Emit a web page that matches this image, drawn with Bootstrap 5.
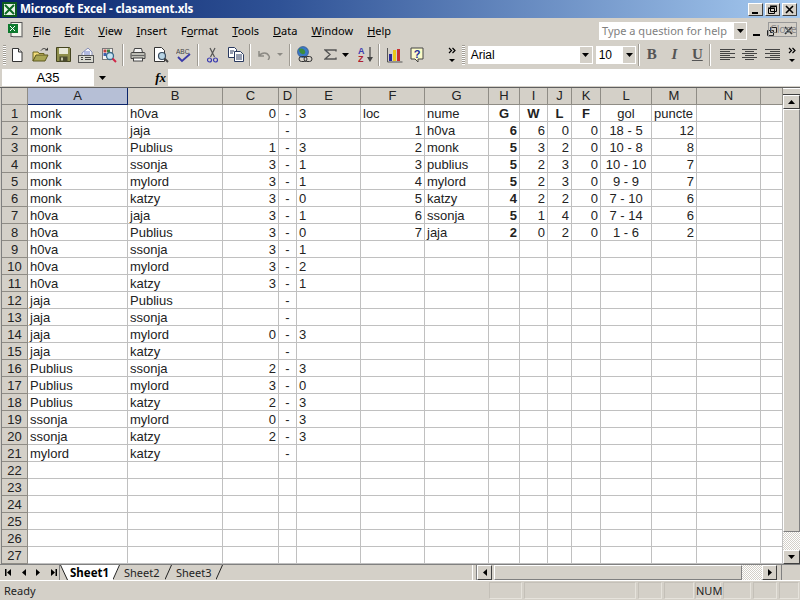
<!DOCTYPE html>
<html lang="en"><head><meta charset="utf-8"><title>Microsoft Excel - clasament.xls</title>
<link href="https://cdn.jsdelivr.net/npm/bootstrap@5.3.0/dist/css/bootstrap.min.css" rel="stylesheet">
<style>
html,body{margin:0;width:800px;height:600px;overflow:hidden;background:#d4d0c8}
body{font-family:"Noto Sans",sans-serif;font-size:11px;line-height:1;color:#000}
svg{display:block;flex:none}
.xl-title{height:18px;background:linear-gradient(90deg,#0a246a 0%,#2f5296 35%,#a6caf0 100%);color:#fff;font-weight:700;font-size:11.6px;padding-left:2px}
.xl-title span{margin-left:3px;letter-spacing:-.1px}
.xl-winbtn{width:15px;height:13px;background:#d4d0c8;border:1px solid;border-color:#fff #404040 #404040 #fff;margin-right:2px}
.xl-winbtns{margin-left:auto;margin-right:1px}
.xl-menu{height:23px;padding-left:6px;position:relative}
.xl-menuitem{margin-right:14px;font-size:11px;padding-top:2px}
.xl-helpbox{position:absolute;left:599px;top:4px;width:148px;height:18px;background:#fff;color:#808080;font-size:11px;padding-left:3px;padding-bottom:2px;white-space:nowrap}
.xl-helpdrop{width:12px;height:16px;background:#d4d0c8;margin-left:auto;margin-right:1px;margin-bottom:-2px}
.xl-docbtns{position:absolute;left:752px;top:4px;width:46px;height:18px}
.xl-close{position:absolute;left:768px;top:4px;width:29px;height:15px;border:1px solid #999;color:#8a8a8a;font-size:10.500px;padding-left:1px;line-height:13px}
.xl-tools{height:27px;padding-left:3px}
.xl-grip{width:3px;height:20px;margin-right:0;background:repeating-linear-gradient(180deg,#a09c94 0 1px,#fff 1px 2px)}
.xl-ic{width:23px;height:22px}
.xl-ic8{width:8px;height:22px}
.xl-sep{width:1px;height:22px;background:#a09c94;border-right:1px solid #fff;box-sizing:content-box;margin:0 2px}
.xl-field{height:18px;background:#fff;font-family:"Liberation Sans",sans-serif;font-size:12px;padding-left:3px}
.xl-font{width:126px;margin-left:3px}
.xl-size{width:41px;margin-left:3px}
.xl-fdrop{width:12px;height:16px;background:#d4d0c8;margin-left:auto;margin-right:1px}
.xl-fmtb{width:23px;font-family:"Liberation Serif",serif;font-weight:700;font-size:15px;color:#555;text-align:center}
.xl-formula{height:20px;border-bottom:1px solid #5f5f5f;padding:1px 0}
.xl-name{width:92px;height:17px;margin-left:2px;background:#fff;font-family:"Liberation Sans",sans-serif;font-size:13px;text-align:center;line-height:17px}
.xl-fx{width:60px;font-family:"Liberation Serif",serif;font-style:italic;font-weight:700;font-size:13px;text-align:right;padding-right:2px}
.xl-fbar{flex:1;height:17px;background:#fff}
.xl-sheet{height:476px}
.xl-grid{table-layout:fixed;border-collapse:separate;border-spacing:0;width:781px;margin:0 0 0 1px;border-left:1px solid #808080;box-sizing:content-box;font-family:"Liberation Sans",sans-serif;font-size:13px;background:#fff;color:#222}
.xl-grid>thead>tr>th,.xl-grid>tbody>tr>th{background:#d4d0c8;font-weight:400;text-align:center;border:0;border-right:1px solid #8f8c85;border-bottom:1px solid #8f8c85;padding:0;height:17px;line-height:16px;color:#222}
.xl-grid>thead>tr>th.xl-cur{background:#b6bfd6;border-right:1px solid #0a246a;border-bottom:1px solid #0a246a}
.xl-grid>tbody>tr>th{line-height:14px;vertical-align:bottom}
.xl-grid>tbody>tr>td{border:0;border-right:1px solid #c0c0c0;border-bottom:1px solid #c0c0c0;padding:0 2px;height:17px;line-height:14px;vertical-align:bottom;white-space:nowrap;overflow:hidden;background:#fff}
.xl-grid>tbody>tr>td.r{text-align:right}
.xl-grid>tbody>tr>td.c{text-align:center}
.xl-grid>tbody>tr>td.b{font-weight:700}
.xl-vscroll{width:17px;height:476px;background:#d4d0c8}
.xl-split{height:7px;border-top:1px solid #fff;border-bottom:1px solid #404040;margin:0}
.xl-sbtn{background:#d4d0c8;border:1px solid;border-color:#fff #404040 #404040 #fff}
.xl-vbtn{height:14px}
.xl-thumb{flex:1;background:#d4d0c8;border:1px solid;border-color:#fff #808080 #808080 #fff}
.xl-check{background:repeating-conic-gradient(#d4d0c8 0 25%,#fff 0 50%) 0 0/2px 2px}
.xl-bar{border-top:1px solid #808080;border-bottom:1px solid #fff;box-sizing:content-box;height:15px}
.xl-nav{width:60px;padding-left:5px;justify-content:space-between;padding-right:2px;border-right:1px solid #808080}
.xl-tab{height:15px;font-size:11px;line-height:15px;color:#222}
.xl-tabon{background:#fff;font-weight:700;font-size:11.5px;color:#000;margin:0}
.xl-hwrap{margin-left:auto;margin-right:17px;width:311px}
.xl-hbtn{width:15px;height:15px}
.xl-status{height:19px;padding-left:4px;font-size:11px;position:relative;color:#222}
.xl-panel{height:17px;border:1px solid;border-color:#c4c0b8 #e6e3dc #e6e3dc #c4c0b8}
.xl-panels{position:absolute;left:489px;top:1px;gap:2px}
</style></head>
<body>
<div class="xl-title d-flex align-items-center">
<svg width="15" height="15" viewBox="0 0 15 15"><rect width="15" height="15" fill="#0c5a1e"/><rect x="2" y="2" width="11" height="11" fill="#e8f2e8"/><path d="M3 3l9 9M12 3l-9 9" stroke="#0c6a22" stroke-width="2"/></svg>
<span>Microsoft Excel - clasament.xls</span>
<div class="xl-winbtns d-flex">
<div class="xl-winbtn"><svg width="13" height="11" viewBox="0 0 13 11"><rect x="3" y="8" width="6" height="2" fill="#000"/></svg></div>
<div class="xl-winbtn"><svg width="13" height="11" viewBox="0 0 13 11"><path d="M4.500 2.500h6v5h-6zM2.500 4.500h6v5h-6z" fill="#d4d0c8" stroke="#000"/><path d="M4 2h7M2 4h7" stroke="#000"/></svg></div>
<div class="xl-winbtn"><svg width="13" height="11" viewBox="0 0 13 11"><path d="M3 2l7 7M10 2l-7 7" stroke="#000" stroke-width="1.600"/></svg></div>
</div>
</div>
<div class="xl-menu d-flex align-items-center">
<svg class="me-1" width="18" height="18" viewBox="0 0 18 18"><rect x="5" y="1.500" width="11" height="14" fill="#f4f4ec" stroke="#555"/><rect x="2" y="3" width="10" height="9" fill="#0e7a2e"/><path d="M4 5l5 5M9 5l-5 5" stroke="#fff"/><path d="M7 16h10" stroke="#999"/></svg>
<div class="d-flex" style="margin-left:5px">
<div class="xl-menuitem"><u>F</u>ile</div><div class="xl-menuitem"><u>E</u>dit</div><div class="xl-menuitem"><u>V</u>iew</div><div class="xl-menuitem"><u>I</u>nsert</div><div class="xl-menuitem">F<u>o</u>rmat</div><div class="xl-menuitem"><u>T</u>ools</div><div class="xl-menuitem"><u>D</u>ata</div><div class="xl-menuitem"><u>W</u>indow</div><div class="xl-menuitem"><u>H</u>elp</div>
</div>
<div class="xl-helpbox d-flex align-items-center">Type a question for help<div class="xl-helpdrop d-flex align-items-center justify-content-center"><svg width="7" height="4"><path d="M0 0h7L3.500 4z" fill="#000"/></svg></div></div>
<div class="xl-docbtns"><svg width="46" height="18" viewBox="0 0 46 18"><rect x="1" y="12" width="7" height="2" fill="#000"/><path d="M18.500 5.500h6v5h-6zM15.500 8.500h6v5h-6z" fill="none" stroke="#222"/><path d="M33 5l7 7M40 5l-7 7" stroke="#333" stroke-width="1.600"/></svg></div>
<div class="xl-close">Close</div>
</div>
<div class="xl-tools d-flex align-items-center">
<div class="xl-grip"></div>
<div class="xl-ic d-flex align-items-center justify-content-center"><svg width="16" height="16" viewBox="0 0 16 16"><path d="M3.500 1.500h6l3.500 3.500v9.500h-9.500z" fill="#fff" stroke="#333"/><path d="M9.500 1.500v3.500h3.500" fill="#ddd" stroke="#333"/></svg></div>
<div class="xl-ic d-flex align-items-center justify-content-center"><svg width="17" height="16" viewBox="0 0 17 16"><path d="M1 5h5l1 1.500h5v2.500H4L1 14z" fill="#f2dc7a" stroke="#6a6420"/><path d="M1 14l3-6h12l-3 6z" fill="#a9a552" stroke="#5c5820"/><path d="M9 3.500c2-2.500 4-2.500 5.500-.5" fill="none" stroke="#333"/><path d="M13 3.500h3V.5z" fill="#333"/></svg></div>
<div class="xl-ic d-flex align-items-center justify-content-center"><svg width="15" height="15" viewBox="0 0 15 15"><path d="M.5.500h13l1 1v13H.5z" fill="#8f8f4c" stroke="#444420"/><rect x="3" y="1" width="9" height="6" fill="#e8e8d8"/><rect x="3.500" y="9.500" width="8" height="5" fill="#4a4a30"/><rect x="5" y="10.500" width="2" height="3" fill="#c8c8a8"/></svg></div>
<div class="xl-ic d-flex align-items-center justify-content-center"><svg width="16" height="16" viewBox="0 0 16 16"><path d="M4 6l6-5 4 4v4H4z" fill="#f4f4fa" stroke="#8890b8"/><path d="M6 5h6M6 7h6" stroke="#7080c8"/><rect x=".5" y="8.500" width="15" height="7" fill="#d8d8d0" stroke="#555"/><path d="M3 10.500h2M3 12.500h2M7 10.500h6M7 12.500h6" stroke="#444"/></svg></div>
<div class="xl-ic d-flex align-items-center justify-content-center"><svg width="16" height="16" viewBox="0 0 16 16"><rect x="1.500" y="1.500" width="10" height="11" fill="#f4f4f4" stroke="#777"/><rect x="2.500" y="2.500" width="3" height="3" fill="#c04040"/><rect x="6" y="2.500" width="3" height="3" fill="#408040"/><rect x="2.500" y="6" width="3" height="3" fill="#4060b0"/><circle cx="9" cy="9" r="3.500" fill="#c8e4f4" stroke="#3a6a8a" stroke-width="1.300"/><path d="M11.500 11.500l3.500 3.500" stroke="#d02848" stroke-width="2"/></svg></div>
<div class="xl-sep" style="margin:0 3px 0 2px"></div>
<div class="xl-ic d-flex align-items-center justify-content-center"><svg width="16" height="15" viewBox="0 0 16 15"><path d="M4.500 1.500h7l1 4h-9z" fill="#f4f4f4" stroke="#444"/><path d="M1 6.500q0-1 1-1h12q1 0 1 1v5H1z" fill="#bcbcb4" stroke="#444"/><path d="M1.500 8.500h13" stroke="#666"/><rect x="3.500" y="11" width="9" height="3" fill="#fff" stroke="#444"/></svg></div>
<div class="xl-ic d-flex align-items-center justify-content-center"><svg width="16" height="16" viewBox="0 0 16 16"><path d="M1.500.5h7l3 3v11h-10z" fill="#fff" stroke="#333"/><circle cx="9" cy="9" r="3.500" fill="#b8d4e4" stroke="#384c60" stroke-width="1.200"/><path d="M11.500 11.500l3.500 3.500" stroke="#444" stroke-width="2"/></svg></div>
<div class="xl-ic d-flex align-items-center justify-content-center"><svg width="16" height="16" viewBox="0 0 16 16"><text x="0" y="6.500" font-family="Liberation Sans,sans-serif" font-size="6.500" fill="#444">ABC</text><path d="M2 10l4 4 8-7" fill="none" stroke="#3a3aa8" stroke-width="1.800"/></svg></div>
<div class="xl-sep"></div>
<div class="xl-ic d-flex align-items-center justify-content-center"><svg width="11" height="16" viewBox="0 0 11 16"><path d="M3 1l4.500 9M8 1L3.500 10" stroke="#555" stroke-width="1.200"/><circle cx="2.500" cy="13" r="2" fill="none" stroke="#3a3ab0" stroke-width="1.200"/><circle cx="8.500" cy="13" r="2" fill="none" stroke="#3a3ab0" stroke-width="1.200"/></svg></div>
<div class="xl-ic d-flex align-items-center justify-content-center"><svg width="16" height="15" viewBox="0 0 16 15"><path d="M.5.500h6l2 2v8h-8z" fill="#fff" stroke="#2a3a60"/><path d="M6.500 4.500h6l3 3v7h-9z" fill="#fff" stroke="#2a3a60"/><path d="M2 4h4M2 6h3M8 8h6M8 10h6M8 12h6" stroke="#2a3a60"/></svg></div>
<div class="xl-sep"></div>
<div class="xl-ic d-flex align-items-center justify-content-center"><svg width="13" height="10" viewBox="0 0 13 10"><path d="M1 1v5h5M1 6c3-4 8-4 10 0 1 2 0 3-1 4" fill="none" stroke="#8c8a84" stroke-width="1.500"/></svg></div>
<div class="xl-ic8 d-flex align-items-center justify-content-center"><svg width="6" height="3"><path d="M0 0h6L3 3z" fill="#8c8a84"/></svg></div>
<div class="xl-sep" style="margin-left:5px"></div>
<div class="xl-ic d-flex align-items-center justify-content-center"><svg width="17" height="17" viewBox="0 0 17 17"><circle cx="7" cy="6" r="5.500" fill="#3a78c8" stroke="#284878" stroke-width=".6"/><path d="M3 3c3-1 5 0 6 2s-1 4-3 3-3-2-3-5z" fill="#3c8c3c"/><rect x="3" y="10.500" width="8" height="5" rx="2.500" fill="none" stroke="#333"/><rect x="8" y="10.500" width="8" height="5" rx="2.500" fill="none" stroke="#333"/></svg></div>
<div class="xl-ic d-flex align-items-center justify-content-center" style="margin-left:3px"><svg width="13" height="11" viewBox="0 0 13 11"><path d="M12 2.500V1H1l5 4.500L1 10h11V8.500" fill="none" stroke="#555" stroke-width="1.400"/></svg></div>
<div class="xl-ic8 d-flex align-items-center justify-content-center"><svg width="7" height="4"><path d="M0 0h7L3.500 4z" fill="#000"/></svg></div>
<div class="d-flex align-items-center justify-content-center" style="width:20px;height:22px;margin-left:7px"><svg width="17" height="17" viewBox="0 0 17 17"><text x="0" y="7.500" font-family="Liberation Sans,sans-serif" font-size="9" font-weight="700" fill="#3a3ab0">A</text><text x="0" y="16" font-family="Liberation Sans,sans-serif" font-size="9" font-weight="700" fill="#b02030">Z</text><path d="M12 1v11" stroke="#444" stroke-width="1.200"/><path d="M9 11h6l-3 5z" fill="#444"/></svg></div>
<div class="xl-sep" style="margin:0 3px 0 2px"></div>
<div class="xl-ic d-flex align-items-center justify-content-center"><svg width="16" height="16" viewBox="0 0 16 16"><path d="M.5 1v14h15" fill="none" stroke="#555"/><rect x="2" y="7" width="3" height="7" fill="#2a2a9a"/><rect x="6" y="3" width="3" height="11" fill="#e8c818"/><rect x="10" y="2" width="3" height="12" fill="#c83030"/></svg></div>
<div class="xl-ic d-flex align-items-center justify-content-center"><svg width="14" height="16" viewBox="0 0 14 16"><path d="M1 1h12v11H8v3l-3-3H1z" fill="#fbfbc8" stroke="#444"/><text x="7" y="10.500" text-anchor="middle" font-family="Liberation Sans,sans-serif" font-size="11" font-weight="700" fill="#22309a">?</text></svg></div>
<div class="d-flex align-items-center" style="width:33px;height:22px;padding-left:19px"><svg width="8" height="16" viewBox="0 0 8 16"><path d="M1 1l2.500 2.500L1 6M4.500 1L7 3.500 4.500 6" fill="none" stroke="#000" stroke-width="1.200"/><path d="M1 12h6l-3 3z" fill="#000"/></svg></div>
<div class="xl-grip"></div>
<div class="xl-field xl-font d-flex align-items-center">Arial<div class="xl-fdrop d-flex align-items-center justify-content-center"><svg width="7" height="4"><path d="M0 0h7L3.500 4z" fill="#000"/></svg></div></div>
<div class="xl-field xl-size d-flex align-items-center">10<div class="xl-fdrop d-flex align-items-center justify-content-center"><svg width="7" height="4"><path d="M0 0h7L3.500 4z" fill="#000"/></svg></div></div>
<div class="xl-sep" style="margin:0 0 0 2px"></div>
<div class="xl-fmtb">B</div>
<div class="xl-fmtb fst-italic">I</div>
<div class="xl-fmtb text-decoration-underline">U</div>
<div class="xl-sep" style="margin:0 5px 0 0"></div>
<div class="xl-ic d-flex align-items-center justify-content-center"><svg width="15" height="11" viewBox="0 0 15 11"><path d="M0 .500h15M0 2.500h10M0 4.500h15M0 6.500h10M0 8.500h15M0 10.500h10" stroke="#444"/></svg></div>
<div class="xl-ic d-flex align-items-center justify-content-center"><svg width="15" height="11" viewBox="0 0 15 11"><path d="M0 .500h15M3 2.500h9M0 4.500h15M3 6.500h9M0 8.500h15M3 10.500h9" stroke="#444"/></svg></div>
<div class="xl-ic d-flex align-items-center justify-content-center"><svg width="15" height="11" viewBox="0 0 15 11"><path d="M0 .500h15M5 2.500h10M0 4.500h15M5 6.500h10M0 8.500h15M5 10.500h10" stroke="#444"/></svg></div>
<div class="d-flex align-items-center justify-content-center" style="width:16px;height:22px"><svg width="8" height="16" viewBox="0 0 8 16"><path d="M1 1l2.500 2.500L1 6M4.500 1L7 3.500 4.500 6" fill="none" stroke="#000" stroke-width="1.200"/><path d="M1 12h6l-3 3z" fill="#000"/></svg></div>
</div>
<div class="xl-formula d-flex align-items-center">
<div class="xl-name">A35</div>
<div class="d-flex justify-content-center" style="width:12px;margin-left:2px"><svg width="7" height="4"><path d="M0 0h7L3.500 4z" fill="#000"/></svg></div>
<div class="xl-fx">fx</div>
<div class="xl-fbar"></div>
</div>
<div class="xl-sheet d-flex">
<div class="flex-grow-0 overflow-hidden">
<table class="table xl-grid">
<colgroup><col style="width:26px"><col style="width:100px"><col style="width:95px"><col style="width:56px"><col style="width:18px"><col style="width:64px"><col style="width:64px"><col style="width:64px"><col style="width:31px"><col style="width:28px"><col style="width:24px"><col style="width:29px"><col style="width:51px"><col style="width:45px"><col style="width:64px"><col style="width:22px"></colgroup>
<thead><tr><th></th><th class="xl-cur">A</th><th>B</th><th>C</th><th>D</th><th>E</th><th>F</th><th>G</th><th>H</th><th>I</th><th>J</th><th>K</th><th>L</th><th>M</th><th>N</th><th></th></tr></thead>
<tbody>
<tr><th>1</th><td>monk</td><td>h0va</td><td class="r">0</td><td class="c">-</td><td>3</td><td>loc</td><td>nume</td><td class="c b">G</td><td class="c b">W</td><td class="c b">L</td><td class="c b">F</td><td class="c">gol</td><td>puncte</td><td></td><td></td></tr>
<tr><th>2</th><td>monk</td><td>jaja</td><td class="r"></td><td class="c">-</td><td></td><td class="r">1</td><td>h0va</td><td class="r b">6</td><td class="r">6</td><td class="r">0</td><td class="r">0</td><td class="c">18 - 5</td><td class="r">12</td><td></td><td></td></tr>
<tr><th>3</th><td>monk</td><td>Publius</td><td class="r">1</td><td class="c">-</td><td>3</td><td class="r">2</td><td>monk</td><td class="r b">5</td><td class="r">3</td><td class="r">2</td><td class="r">0</td><td class="c">10 - 8</td><td class="r">8</td><td></td><td></td></tr>
<tr><th>4</th><td>monk</td><td>ssonja</td><td class="r">3</td><td class="c">-</td><td>1</td><td class="r">3</td><td>publius</td><td class="r b">5</td><td class="r">2</td><td class="r">3</td><td class="r">0</td><td class="c">10 - 10</td><td class="r">7</td><td></td><td></td></tr>
<tr><th>5</th><td>monk</td><td>mylord</td><td class="r">3</td><td class="c">-</td><td>1</td><td class="r">4</td><td>mylord</td><td class="r b">5</td><td class="r">2</td><td class="r">3</td><td class="r">0</td><td class="c">9 - 9</td><td class="r">7</td><td></td><td></td></tr>
<tr><th>6</th><td>monk</td><td>katzy</td><td class="r">3</td><td class="c">-</td><td>0</td><td class="r">5</td><td>katzy</td><td class="r b">4</td><td class="r">2</td><td class="r">2</td><td class="r">0</td><td class="c">7 - 10</td><td class="r">6</td><td></td><td></td></tr>
<tr><th>7</th><td>h0va</td><td>jaja</td><td class="r">3</td><td class="c">-</td><td>1</td><td class="r">6</td><td>ssonja</td><td class="r b">5</td><td class="r">1</td><td class="r">4</td><td class="r">0</td><td class="c">7 - 14</td><td class="r">6</td><td></td><td></td></tr>
<tr><th>8</th><td>h0va</td><td>Publius</td><td class="r">3</td><td class="c">-</td><td>0</td><td class="r">7</td><td>jaja</td><td class="r b">2</td><td class="r">0</td><td class="r">2</td><td class="r">0</td><td class="c">1 - 6</td><td class="r">2</td><td></td><td></td></tr>
<tr><th>9</th><td>h0va</td><td>ssonja</td><td class="r">3</td><td class="c">-</td><td>1</td><td></td><td></td><td></td><td></td><td></td><td></td><td></td><td></td><td></td><td></td></tr>
<tr><th>10</th><td>h0va</td><td>mylord</td><td class="r">3</td><td class="c">-</td><td>2</td><td></td><td></td><td></td><td></td><td></td><td></td><td></td><td></td><td></td><td></td></tr>
<tr><th>11</th><td>h0va</td><td>katzy</td><td class="r">3</td><td class="c">-</td><td>1</td><td></td><td></td><td></td><td></td><td></td><td></td><td></td><td></td><td></td><td></td></tr>
<tr><th>12</th><td>jaja</td><td>Publius</td><td class="r"></td><td class="c">-</td><td></td><td></td><td></td><td></td><td></td><td></td><td></td><td></td><td></td><td></td><td></td></tr>
<tr><th>13</th><td>jaja</td><td>ssonja</td><td class="r"></td><td class="c">-</td><td></td><td></td><td></td><td></td><td></td><td></td><td></td><td></td><td></td><td></td><td></td></tr>
<tr><th>14</th><td>jaja</td><td>mylord</td><td class="r">0</td><td class="c">-</td><td>3</td><td></td><td></td><td></td><td></td><td></td><td></td><td></td><td></td><td></td><td></td></tr>
<tr><th>15</th><td>jaja</td><td>katzy</td><td class="r"></td><td class="c">-</td><td></td><td></td><td></td><td></td><td></td><td></td><td></td><td></td><td></td><td></td><td></td></tr>
<tr><th>16</th><td>Publius</td><td>ssonja</td><td class="r">2</td><td class="c">-</td><td>3</td><td></td><td></td><td></td><td></td><td></td><td></td><td></td><td></td><td></td><td></td></tr>
<tr><th>17</th><td>Publius</td><td>mylord</td><td class="r">3</td><td class="c">-</td><td>0</td><td></td><td></td><td></td><td></td><td></td><td></td><td></td><td></td><td></td><td></td></tr>
<tr><th>18</th><td>Publius</td><td>katzy</td><td class="r">2</td><td class="c">-</td><td>3</td><td></td><td></td><td></td><td></td><td></td><td></td><td></td><td></td><td></td><td></td></tr>
<tr><th>19</th><td>ssonja</td><td>mylord</td><td class="r">0</td><td class="c">-</td><td>3</td><td></td><td></td><td></td><td></td><td></td><td></td><td></td><td></td><td></td><td></td></tr>
<tr><th>20</th><td>ssonja</td><td>katzy</td><td class="r">2</td><td class="c">-</td><td>3</td><td></td><td></td><td></td><td></td><td></td><td></td><td></td><td></td><td></td><td></td></tr>
<tr><th>21</th><td>mylord</td><td>katzy</td><td class="r"></td><td class="c">-</td><td></td><td></td><td></td><td></td><td></td><td></td><td></td><td></td><td></td><td></td><td></td></tr>
<tr><th>22</th><td></td><td></td><td></td><td></td><td></td><td></td><td></td><td></td><td></td><td></td><td></td><td></td><td></td><td></td><td></td></tr>
<tr><th>23</th><td></td><td></td><td></td><td></td><td></td><td></td><td></td><td></td><td></td><td></td><td></td><td></td><td></td><td></td><td></td></tr>
<tr><th>24</th><td></td><td></td><td></td><td></td><td></td><td></td><td></td><td></td><td></td><td></td><td></td><td></td><td></td><td></td><td></td></tr>
<tr><th>25</th><td></td><td></td><td></td><td></td><td></td><td></td><td></td><td></td><td></td><td></td><td></td><td></td><td></td><td></td><td></td></tr>
<tr><th>26</th><td></td><td></td><td></td><td></td><td></td><td></td><td></td><td></td><td></td><td></td><td></td><td></td><td></td><td></td><td></td></tr>
<tr><th>27</th><td></td><td></td><td></td><td></td><td></td><td></td><td></td><td></td><td></td><td></td><td></td><td></td><td></td><td></td><td></td></tr>
</tbody></table>
</div>
<div class="xl-vscroll d-flex flex-column">
<div class="xl-split"></div>
<div class="xl-sbtn xl-vbtn d-flex align-items-center justify-content-center"><svg width="7" height="4"><path d="M0 4h7L3.500 0z" fill="#000"/></svg></div>
<div class="xl-thumb"></div>
<div class="xl-check" style="height:18px"></div>
<div class="xl-sbtn xl-vbtn d-flex align-items-center justify-content-center"><svg width="7" height="4"><path d="M0 0h7L3.500 4z" fill="#000"/></svg></div>
</div>
</div>
<div class="xl-bar d-flex">
<div class="xl-nav d-flex align-items-center">
<svg width="6" height="7"><path d="M0 0h1.500v7H0zM6 0v7L2 3.500z" fill="#000"/></svg>
<svg width="4" height="7"><path d="M4 0v7L0 3.500z" fill="#000"/></svg>
<svg width="4" height="7"><path d="M0 0v7L4 3.500z" fill="#000"/></svg>
<svg width="6" height="7"><path d="M0 0v7L4 3.500zM4.500 0H6v7H4.500z" fill="#000"/></svg>
</div>
<svg width="8" height="15" viewBox="0 0 8 15"><path d="M0 0l8 15V0z" fill="#fff"/><path d="M.5 0l7 15" stroke="#222"/></svg>
<div class="xl-tab xl-tabon" style="width:45px;padding-left:2px">Sheet1</div>
<svg width="7" height="15" viewBox="0 0 7 15"><path d="M0 0h7L0 15z" fill="#fff"/><path d="M6.500 0L0 14.500" stroke="#222"/></svg>
<div class="xl-tab" style="width:45px;padding-left:4px">Sheet2</div>
<svg width="7" height="15" viewBox="0 0 7 15"><path d="M6.500 0L0 14.500" stroke="#222"/></svg>
<div class="xl-tab" style="width:44px;padding-left:4px">Sheet3</div>
<svg width="7" height="15" viewBox="0 0 7 15"><path d="M6.500 0L0 14.500" stroke="#222"/></svg>
<div class="xl-hwrap d-flex align-items-stretch">
<div style="width:5px;border-left:1px solid #fff;border-right:1px solid #808080"></div>
<div class="xl-sbtn xl-hbtn d-flex align-items-center justify-content-center"><svg width="4" height="7"><path d="M4 0v7L0 3.500z" fill="#000"/></svg></div>
<div class="xl-thumb" style="flex:none;width:248px;margin-left:2px"></div>
<div class="xl-check" style="width:20px"></div>
<div class="xl-sbtn xl-hbtn d-flex align-items-center justify-content-center"><svg width="4" height="7"><path d="M0 0v7L4 3.500z" fill="#000"/></svg></div>
<div style="width:5px;border-right:1px solid #808080"></div>
</div>
</div>
<div class="xl-status d-flex align-items-center">Ready
<div class="xl-panels d-flex">
<div class="xl-panel" style="width:33px"></div><div class="xl-panel" style="width:112px"></div><div class="xl-panel" style="width:24px"></div><div class="xl-panel" style="width:30px"></div>
<div class="xl-panel text-center" style="width:26px;line-height:15px;margin-left:-1px">NUM</div>
<div class="xl-panel" style="width:28px"></div><div class="xl-panel" style="width:24px"></div><div class="xl-panel" style="width:20px"></div>
</div>
</div>
</body></html>
